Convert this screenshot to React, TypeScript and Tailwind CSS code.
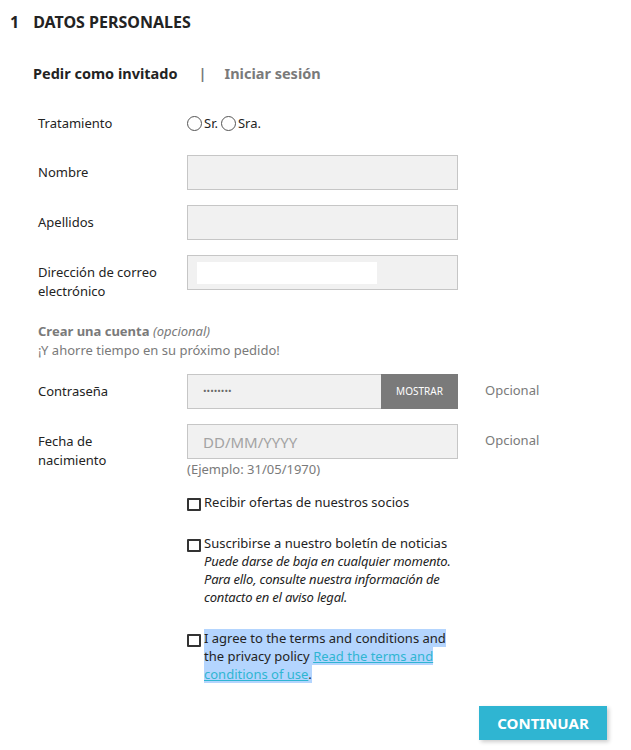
import type { ReactNode } from "react";

const inputCls =
  "h-[35px] w-[271px] border border-[#c6c6c6] bg-[#f1f1f1] px-[15px] text-[15px] text-[#232323] outline-none placeholder:text-[#a3a3a3]";

function Row({ label, children, note, className = "" }: { label: ReactNode; children: ReactNode; note?: string; className?: string }) {
  return (
    <div className={`flex items-start pl-[38px] ${className}`}>
      <div className="w-[149px] shrink-0 pt-[8px] text-[13px] leading-[19px]">{label}</div>
      <div className="w-[271px] shrink-0">{children}</div>
      {note && <div className="ml-[27px] pt-[7px] text-[13px] leading-[19px] text-[#7a7a7a]">{note}</div>}
    </div>
  );
}

function Radio({ label }: { label: string }) {
  return (
    <label className="flex items-center">
      <span className="h-[15px] w-[15px] rounded-full border border-[#555]" />
      <span className="ml-[2px] mr-[3px] text-[13px]">{label}</span>
    </label>
  );
}

function Check({ children, className = "" }: { children: ReactNode; className?: string }) {
  return (
    <div className={`flex items-start ${className}`}>
      <span className="mt-[5px] h-[13px] w-[14px] shrink-0 border-2 border-[#333] rounded-[1px]" />
      <div className="ml-[3px] w-[256px] text-[13px] leading-[18px]">{children}</div>
    </div>
  );
}

export default function App() {
  return (
    <div className="min-h-[750px] w-full bg-white font-['Noto_Sans',sans-serif] text-[#232323]">
      <h1 className="flex pl-[10px] pt-[11px] text-[16px] font-bold leading-[22px]">
        <span>1</span>
        <span className="ml-[14px]">DATOS PERSONALES</span>
      </h1>

      <div className="mt-[29px] flex items-center pl-[33px] text-[14.5px] font-bold leading-[22px]">
        <span>Pedir como invitado</span>
        <span className="ml-[21px] text-[#7a7a7a]">|</span>
        <span className="ml-[18px] text-[#7a7a7a]">Iniciar sesión</span>
      </div>

      <Row label="Tratamiento" className="mt-[22px]">
        <div className="flex h-[35px] items-center">
          <Radio label="Sr." />
          <Radio label="Sra." />
        </div>
      </Row>

      <Row label="Nombre" className="mt-[14px]">
        <input className={inputCls} />
      </Row>

      <Row label="Apellidos" className="mt-[15px]">
        <input className={inputCls} />
      </Row>

      <Row label={<>Dirección de correo<br />electrónico</>} className="mt-[15px]">
        <div className="flex h-[35px] w-[271px] items-center border border-[#c6c6c6] bg-[#f1f1f1] pl-[9px]">
          <div className="h-[22px] w-[180px] bg-white" />
        </div>
      </Row>

      <div className="mt-[21px] pl-[38px] text-[13px] leading-[19px] text-[#7a7a7a]">
        <p>
          <span className="font-bold">Crear una cuenta</span> <i>(opcional)</i>
        </p>
        <p>¡Y ahorre tiempo en su próximo pedido!</p>
      </div>

      <Row label="Contraseña" note="Opcional" className="mt-[14px]">
        <div className="flex h-[35px] w-[271px]">
          <div className="flex flex-1 items-center border border-r-0 border-[#c6c6c6] bg-[#f1f1f1] pl-[15px] text-[9.5px] text-[#6a6a6a]">
            ••••••••
          </div>
          <button className="w-[77px] bg-[#7a7a7a] text-[10px] text-white">MOSTRAR</button>
        </div>
      </Row>

      <Row label={<>Fecha de<br />nacimiento</>} note="Opcional" className="mt-[15px]">
        <input className={inputCls} placeholder="DD/MM/YYYY" />
        <p className="mt-[1px] text-[13px] leading-[18px] text-[#7a7a7a]">(Ejemplo: 31/05/1970)</p>
      </Row>

      <div className="mt-[15px] pl-[187px]">
        <Check>Recibir ofertas de nuestros socios</Check>
        <Check className="mt-[23px]">
          Suscribirse a nuestro boletín de noticias
          <br />
          <i className="whitespace-nowrap tracking-[-0.2px]">
            Puede darse de baja en cualquier momento.
            <br />
            Para ello, consulte nuestra información de
            <br />
            contacto en el aviso legal.
          </i>
        </Check>
        <Check className="mt-[23px]">
          <span className="bg-[#b4d5fe] box-decoration-clone">
            I agree to the terms and conditions and the privacy policy{" "}
            <a className="text-[#2fb5d2] underline">Read the terms and conditions of use</a>.
          </span>
        </Check>
      </div>

      <div className="mt-[23px] flex justify-end pr-[24px]">
        <button className="h-[34px] w-[128px] bg-[#2fb5d2] text-[15px] font-bold text-white shadow-[2px_2px_4px_rgba(0,0,0,0.2)]">
          CONTINUAR
        </button>
      </div>
    </div>
  );
}
